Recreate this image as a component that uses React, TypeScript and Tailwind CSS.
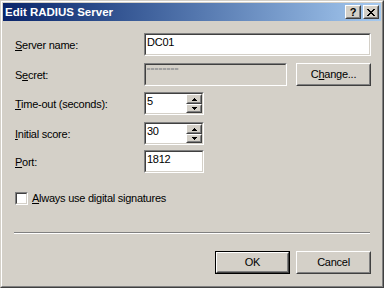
import React from 'react'

function Raised({ className = '', children }: { className?: string; children?: React.ReactNode }) {
  return (
    <div className={`flex border border-t-white border-l-white border-r-[#404040] border-b-[#404040] ${className}`}>
      <div className="flex flex-1 items-center justify-center border border-t-[#d4d0c8] border-l-[#d4d0c8] border-r-[#808080] border-b-[#808080] bg-[#d4d0c8]">
        {children}
      </div>
    </div>
  )
}

function Sunken({
  className = '',
  bg = 'bg-white',
  children,
}: {
  className?: string
  bg?: string
  children?: React.ReactNode
}) {
  return (
    <div className={`flex border border-t-[#808080] border-l-[#808080] border-r-white border-b-white ${className}`}>
      <div className={`flex min-w-0 flex-1 border border-t-[#404040] border-l-[#404040] border-r-[#d4d0c8] border-b-[#d4d0c8] ${bg}`}>
        {children}
      </div>
    </div>
  )
}

function Key({ children }: { children: React.ReactNode }) {
  return <span className="underline decoration-1 underline-offset-[1px]">{children}</span>
}

function Label({ children }: { children: React.ReactNode }) {
  return <div className="w-[129px] shrink-0 pt-[1px]">{children}</div>
}

function Arrow({ down }: { down?: boolean }) {
  return (
    <svg width="5" height="3" viewBox="0 0 5 3" shapeRendering="crispEdges" className={down ? 'rotate-180' : ''}>
      <rect x="2" y="0" width="1" height="1" fill="#000" />
      <rect x="1" y="1" width="3" height="1" fill="#000" />
      <rect x="0" y="2" width="5" height="1" fill="#000" />
    </svg>
  )
}

function SpinBox({ value }: { value: string }) {
  return (
    <Sunken className="h-[23px] w-[60px]">
      <div className="flex-1 pl-[1px] pt-[1px]">{value}</div>
      <div className="flex w-[16px] flex-col">
        <Raised className="h-[10px]">
          <Arrow />
        </Raised>
        <Raised className="flex-1">
          <Arrow down />
        </Raised>
      </div>
    </Sunken>
  )
}

export default function App() {
  return (
    <div className="h-[288px] w-[384px] border border-t-[#d4d0c8] border-l-[#d4d0c8] border-r-[#404040] border-b-[#404040] font-['Liberation_Sans',Arial,sans-serif] text-[11px] leading-[13px] tracking-[-0.25px] text-black">
      <div className="flex h-full flex-col border border-t-white border-l-white border-r-[#808080] border-b-[#808080] bg-[#d4d0c8] p-[1px]">
        {/* title bar */}
        <div className="flex h-[18px] shrink-0 items-center bg-gradient-to-r from-[#0a246a] to-[#a6caf0] pl-[2px] pr-[2px]">
          <span className="flex-1 text-[11.5px] font-bold tracking-normal text-white">Edit RADIUS Server</span>
          <div className="flex gap-[2px]">
            <Raised className="h-[14px] w-[16px]">
              <span className="text-[11px] leading-[10px] font-bold tracking-normal">?</span>
            </Raised>
            <Raised className="h-[14px] w-[16px]">
              <svg width="8" height="7" viewBox="0 0 8 7" shapeRendering="crispEdges">
                <path d="M0 0h2v1h-2zM6 0h2v1h-2zM1 1h2v1h-2zM5 1h2v1h-2zM2 2h4v1h-4zM3 3h2v1h-2zM2 4h4v1h-4zM1 5h2v1h-2zM5 5h2v1h-2zM0 6h2v1h-2zM6 6h2v1h-2z" fill="#000" />
              </svg>
            </Raised>
          </div>
        </div>

        {/* client */}
        <div className="mt-[1px] flex flex-1 flex-col pl-[12px] pr-[10px] pt-[11px]">
          <div className="flex h-[23px] items-center">
            <Label>
              <Key>S</Key>erver name:
            </Label>
            <Sunken className="h-[23px] flex-1">
              <div className="pl-[1px] pt-[1px]">DC01</div>
            </Sunken>
          </div>

          <div className="mt-[7px] flex h-[23px] items-center">
            <Label>
              S<Key>e</Key>cret:
            </Label>
            <Sunken className="h-[23px] w-[143px]" bg="bg-[#d4d0c8]">
              <div className="ml-[1px] mt-[3px] h-[2px] w-[32px] bg-[repeating-linear-gradient(90deg,#a0a0a0_0px,#a0a0a0_3px,#c4c0b8_3px,#c4c0b8_4px)]" />
            </Sunken>
            <Raised className="ml-[9px] h-[23px] w-[75px]">
              <span>
                C<Key>h</Key>ange...
              </span>
            </Raised>
          </div>

          <div className="mt-[6px] flex h-[23px] items-center">
            <Label>
              <Key>T</Key>ime-out (seconds):
            </Label>
            <SpinBox value="5" />
          </div>

          <div className="mt-[7px] flex h-[23px] items-center">
            <Label>
              <Key>I</Key>nitial score:
            </Label>
            <SpinBox value="30" />
          </div>

          <div className="mt-[5px] flex h-[23px] items-center">
            <Label>
              <Key>P</Key>ort:
            </Label>
            <Sunken className="h-[23px] w-[60px]">
              <div className="pl-[1px] pt-[1px]">1812</div>
            </Sunken>
          </div>

          <div className="mt-[19px] flex h-[13px] items-center gap-[4px]">
            <Sunken className="h-[13px] w-[13px]" />
            <span>
              <Key>A</Key>lways use digital signatures
            </span>
          </div>

          <div className="ml-[-1px] mr-[1px] mt-[27px] h-[2px] border-t border-b border-t-[#808080] border-b-white" />

          <div className="mt-[17px] flex justify-end gap-[6px]">
            <div className="flex h-[23px] w-[75px] border border-black">
              <Raised className="flex-1">
                <span>OK</span>
              </Raised>
            </div>
            <Raised className="h-[23px] w-[75px]">
              <span>Cancel</span>
            </Raised>
          </div>
        </div>
      </div>
    </div>
  )
}
